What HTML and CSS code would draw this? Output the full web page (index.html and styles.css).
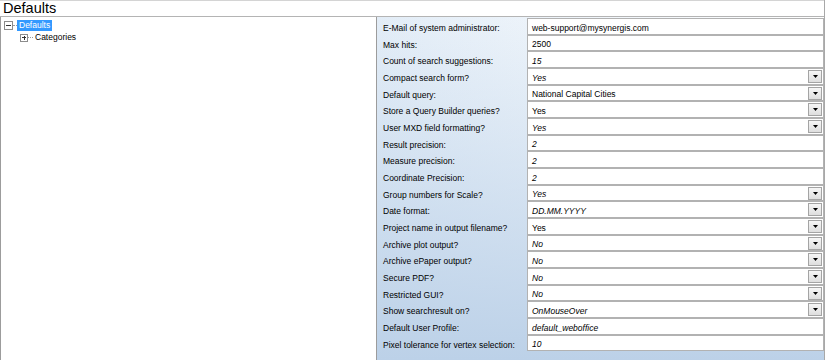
FILE: index.html
```html
<!DOCTYPE html>
<html>
<head>
<meta charset="utf-8">
<link rel="stylesheet" href="styles.css">
</head>
<body>
<div class="frame">
  <div class="title">Defaults</div>
  <div class="main">
    <div class="tree">
      <div class="node root">
        <span class="exp"><span class="minus"></span></span>
        <span class="dots"></span>
        <span class="lbl sel">Defaults</span>
      </div>
      <div class="node child">
        <span class="exp small"><span class="minus"></span><span class="plusv"></span></span>
        <span class="dots"></span>
        <span class="lbl">Categories</span>
      </div>
    </div>
    <div class="props">
      <div class="lab">E-Mail of system administrator:</div><div class="val">web-support@mysynergis.com</div>
      <div class="lab">Max hits:</div><div class="val">2500</div>
      <div class="lab">Count of search suggestions:</div><div class="val it">15</div>
      <div class="lab">Compact search form?</div><div class="val it"><span>Yes</span><span class="dd"><svg width="5" height="3" viewBox="0 0 5 3"><polygon points="0,0 5,0 2.5,3" fill="#000"/></svg></span></div>
      <div class="lab">Default query:</div><div class="val"><span>National Capital Cities</span><span class="dd"><svg width="5" height="3" viewBox="0 0 5 3"><polygon points="0,0 5,0 2.5,3" fill="#000"/></svg></span></div>
      <div class="lab">Store a Query Builder queries?</div><div class="val"><span>Yes</span><span class="dd"><svg width="5" height="3" viewBox="0 0 5 3"><polygon points="0,0 5,0 2.5,3" fill="#000"/></svg></span></div>
      <div class="lab">User MXD field formatting?</div><div class="val it"><span>Yes</span><span class="dd"><svg width="5" height="3" viewBox="0 0 5 3"><polygon points="0,0 5,0 2.5,3" fill="#000"/></svg></span></div>
      <div class="lab">Result precision:</div><div class="val it">2</div>
      <div class="lab">Measure precision:</div><div class="val it">2</div>
      <div class="lab">Coordinate Precision:</div><div class="val it">2</div>
      <div class="lab">Group numbers for Scale?</div><div class="val it"><span>Yes</span><span class="dd"><svg width="5" height="3" viewBox="0 0 5 3"><polygon points="0,0 5,0 2.5,3" fill="#000"/></svg></span></div>
      <div class="lab">Date format:</div><div class="val it"><span>DD.MM.YYYY</span><span class="dd"><svg width="5" height="3" viewBox="0 0 5 3"><polygon points="0,0 5,0 2.5,3" fill="#000"/></svg></span></div>
      <div class="lab">Project name in output filename?</div><div class="val"><span>Yes</span><span class="dd"><svg width="5" height="3" viewBox="0 0 5 3"><polygon points="0,0 5,0 2.5,3" fill="#000"/></svg></span></div>
      <div class="lab">Archive plot output?</div><div class="val it"><span>No</span><span class="dd"><svg width="5" height="3" viewBox="0 0 5 3"><polygon points="0,0 5,0 2.5,3" fill="#000"/></svg></span></div>
      <div class="lab">Archive ePaper output?</div><div class="val it"><span>No</span><span class="dd"><svg width="5" height="3" viewBox="0 0 5 3"><polygon points="0,0 5,0 2.5,3" fill="#000"/></svg></span></div>
      <div class="lab">Secure PDF?</div><div class="val it"><span>No</span><span class="dd"><svg width="5" height="3" viewBox="0 0 5 3"><polygon points="0,0 5,0 2.5,3" fill="#000"/></svg></span></div>
      <div class="lab">Restricted GUI?</div><div class="val it"><span>No</span><span class="dd"><svg width="5" height="3" viewBox="0 0 5 3"><polygon points="0,0 5,0 2.5,3" fill="#000"/></svg></span></div>
      <div class="lab">Show searchresult on?</div><div class="val it"><span>OnMouseOver</span><span class="dd"><svg width="5" height="3" viewBox="0 0 5 3"><polygon points="0,0 5,0 2.5,3" fill="#000"/></svg></span></div>
      <div class="lab">Default User Profile:</div><div class="val it">default_weboffice</div>
      <div class="lab">Pixel tolerance for vertex selection:</div><div class="val it">10</div>
    </div>
  </div>
</div>
</body>
</html>
```

FILE: styles.css
```css
html, body {
  margin: 0;
  padding: 0;
  background: #ffffff;
}

body {
  font-family: "Liberation Sans", Arial, sans-serif;
  color: #000;
  width: 827px;
  height: 360px;
  overflow: hidden;
}

.frame {
  width: 824px;
  height: 360px;
  border-right: 1px solid #a8a8a8;
  display: flex;
  flex-direction: column;
}

.title {
  height: 15px;
  border-top: 1px solid #d4d4d4;
  border-bottom: 1px solid #b4b4b4;
  font-size: 14.5px;
  line-height: 15px;
  padding-left: 3px;
  white-space: nowrap;
}

.main {
  flex: 1;
  display: flex;
}

.tree {
  width: 375px;
  border-left: 1px solid #9c9c9c;
  border-right: 1px solid #9c9c9c;
  padding-top: 3px;
  font-size: 8.5px;
}

.node {
  display: flex;
  align-items: center;
  height: 11px;
}

.root {
  padding-left: 3px;
}

.child {
  margin-top: 1px;
  padding-left: 19px;
}

.exp {
  position: relative;
  width: 7px;
  height: 7px;
  border: 1px solid #8c8c8c;
  background: #fff;
  flex: none;
}

.exp.small {
  width: 6px;
  height: 6px;
}

.minus {
  position: absolute;
  left: 1px;
  right: 1px;
  top: 3px;
  height: 1px;
  background: #333;
}

.small .minus {
  top: 2.5px;
}

.plusv {
  position: absolute;
  top: 1px;
  bottom: 1px;
  left: 2.5px;
  width: 1px;
  background: #333;
}

.dots {
  width: 4px;
  height: 0;
  border-top: 1px dotted #9a9a9a;
  flex: none;
}

.child .dots {
  width: 5px;
}

.lbl {
  height: 11px;
  line-height: 11px;
  padding: 0 2px;
  white-space: nowrap;
}

.sel {
  background: #3399ff;
  color: #fff;
}

.props {
  width: 447px;
  padding-top: 1px;
  display: grid;
  grid-template-columns: 150px 297px;
  grid-template-rows: repeat(6, 17px 16px 17px) 17px 16px;
  align-content: start;
  font-size: 8.5px;
  background:
    linear-gradient(to bottom, rgba(189, 210, 233, 0) 0%, rgba(189, 210, 233, 0.35) 35%, #bcd1e8 100%),
    linear-gradient(to right, #e3edf7 0%, #ffffff 100%);
}

.lab {
  display: flex;
  align-items: center;
  padding-left: 6px;
  padding-top: 3px;
  white-space: nowrap;
}

.val {
  box-sizing: border-box;
  border: 1px solid #b2b2b2;
  background: #ffffff;
  display: flex;
  align-items: center;
  justify-content: space-between;
  padding-left: 4px;
  padding-right: 1px;
  white-space: nowrap;
}

.val > span:first-child,
.val {
  line-height: 10px;
}

.val {
  padding-top: 2px;
}

.val .dd {
  margin-top: -2px;
}

.it {
  font-style: italic;
}

.dd {
  box-sizing: border-box;
  width: 14px;
  height: 13px;
  border: 1px solid #a4a4a4;
  background: linear-gradient(to bottom, #f6f6f6, #dedede);
  display: flex;
  align-items: center;
  justify-content: center;
  flex: none;
}

.dd svg {
  display: block;
}
```
